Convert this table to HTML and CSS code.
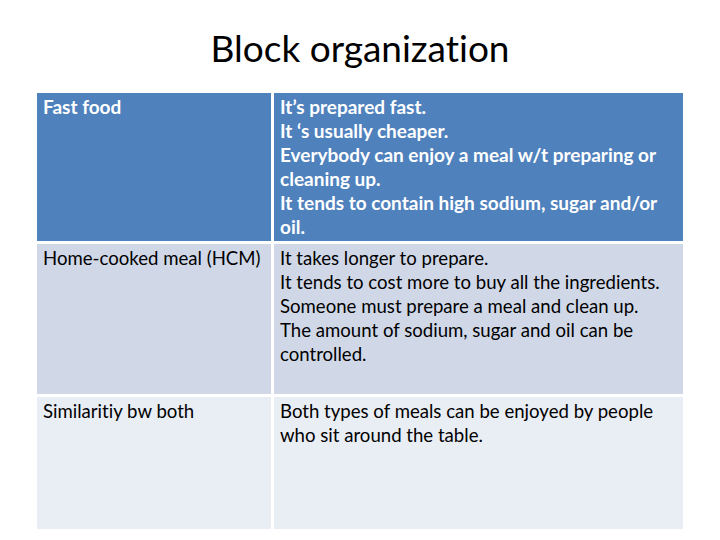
FILE: index.html
```html
<!DOCTYPE html>
<html>
<head>
<meta charset="utf-8">
<link rel="stylesheet" href="styles.css">
</head>
<body>
<div class="slide">
  <h1 class="title">Block organization</h1>
  <div class="table">
    <div class="cell head label">Fast food</div>
    <div class="cell head">It’s prepared fast.<br>It ‘s usually cheaper.<br>Everybody can enjoy a meal w/t preparing or cleaning up.<br>It tends to contain high sodium, sugar and/or oil.</div>
    <div class="cell odd label">Home-cooked meal (HCM)</div>
    <div class="cell odd">It takes longer to prepare.<br>It tends to cost more to buy all the ingredients.<br>Someone must prepare a meal and clean up.<br>The amount of sodium, sugar and oil can be controlled.</div>
    <div class="cell even label">Similaritiy bw both</div>
    <div class="cell even">Both types of meals can be enjoyed by people who sit around the table.</div>
  </div>
</div>
</body>
</html>
```
FILE: styles.css
```css
html, body {
  margin: 0;
  padding: 0;
  background: #ffffff;
}
.slide {
  width: 720px;
  height: 540px;
  font-family: "Lato", "Liberation Sans", sans-serif;
  font-variant-ligatures: none;
  color: #000;
}
.title {
  margin: 0;
  padding-top: 26px;
  height: 93px;
  box-sizing: border-box;
  text-align: center;
  font-weight: normal;
  font-size: 37px;
  line-height: 44px;
}
.table {
  margin-left: 37px;
  width: 646px;
  display: grid;
  grid-template-columns: 234px 409px;
  grid-template-rows: 148px 150px 132px;
  gap: 3px;
  background: #ffffff;
}
.cell {
  padding: 2px 6px 0 6px;
  font-size: 18.6px;
  line-height: 24px;
  box-sizing: border-box;
}
.label {
  white-space: nowrap;
}
.head {
  background: #4f81bd;
  color: #ffffff;
  font-weight: bold;
  font-size: 19px;
}
.odd {
  background: #d0d8e8;
}
.even {
  background: #e9edf4;
}
```
